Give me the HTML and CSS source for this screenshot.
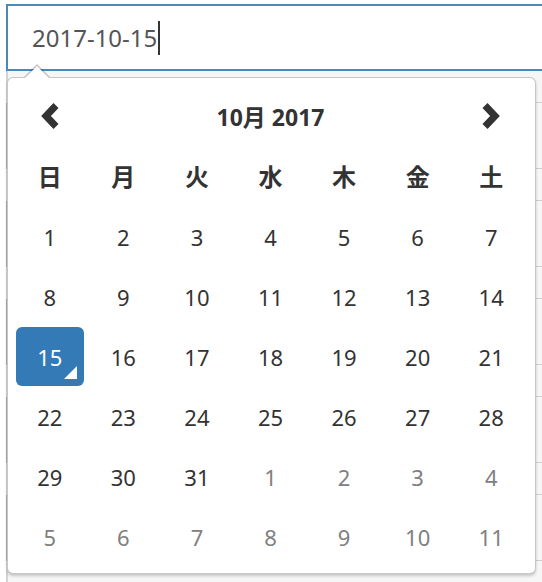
FILE: index.html
```html
<!DOCTYPE html>
<html lang="ja">
<head>
    <meta charset="UTF-8">
    <meta name="viewport" content="width=device-width, initial-scale=1.0">
    <title>Datepicker</title>
    <link rel="stylesheet" href="styles.css">
</head>
<body>
    <div class="field">
        <span class="field-text">2017-10-15</span><span class="text-caret"></span>
    </div>

    <div class="list">
        <div class="row short"></div>
        <div class="row tall"></div>
        <div class="row short"></div>
        <div class="row tall"></div>
        <div class="row short"></div>
        <div class="row tall"></div>
        <div class="row short"></div>
        <div class="row tall"></div>
        <div class="row short"></div>
        <div class="row tall"></div>
        <div class="row short"></div>
    </div>

    <div class="datepicker">
        <div class="dp-head">
            <span class="nav">
                <svg width="24" height="30" viewBox="0 0 24 30"><polyline points="18,4.5 8,15 18,25.5" fill="none" stroke="#333" stroke-width="7" stroke-linejoin="miter"/></svg>
            </span>
            <span class="dp-title">10月 2017</span>
            <span class="nav">
                <svg width="24" height="30" viewBox="0 0 24 30"><polyline points="6,4.5 16,15 6,25.5" fill="none" stroke="#333" stroke-width="7" stroke-linejoin="miter"/></svg>
            </span>
        </div>

        <div class="dp-grid">
            <span class="dow">日</span>
            <span class="dow">月</span>
            <span class="dow">火</span>
            <span class="dow">水</span>
            <span class="dow">木</span>
            <span class="dow">金</span>
            <span class="dow">土</span>

            <span class="day">1</span>
            <span class="day">2</span>
            <span class="day">3</span>
            <span class="day">4</span>
            <span class="day">5</span>
            <span class="day">6</span>
            <span class="day">7</span>

            <span class="day">8</span>
            <span class="day">9</span>
            <span class="day">10</span>
            <span class="day">11</span>
            <span class="day">12</span>
            <span class="day">13</span>
            <span class="day">14</span>

            <span class="day active">15</span>
            <span class="day">16</span>
            <span class="day">17</span>
            <span class="day">18</span>
            <span class="day">19</span>
            <span class="day">20</span>
            <span class="day">21</span>

            <span class="day">22</span>
            <span class="day">23</span>
            <span class="day">24</span>
            <span class="day">25</span>
            <span class="day">26</span>
            <span class="day">27</span>
            <span class="day">28</span>

            <span class="day">29</span>
            <span class="day">30</span>
            <span class="day">31</span>
            <span class="day new">1</span>
            <span class="day new">2</span>
            <span class="day new">3</span>
            <span class="day new">4</span>

            <span class="day new">5</span>
            <span class="day new">6</span>
            <span class="day new">7</span>
            <span class="day new">8</span>
            <span class="day new">9</span>
            <span class="day new">10</span>
            <span class="day new">11</span>
        </div>
    </div>
</body>
</html>
```

FILE: styles.css
```css
body {
    font-family: 'Noto Sans', 'Noto Sans CJK JP', sans-serif;
    margin: 0;
    padding: 0;
    height: 582px;
    overflow: hidden;
    position: relative;
    background-color: #fff;
    color: #333;
}

.field {
    box-sizing: border-box;
    width: 560px;
    height: 67px;
    margin: 4px 0 0 6px;
    padding-left: 24px;
    border: 2px solid #4a8ab9;
    background: #fff;
    display: flex;
    align-items: center;
    font-size: 24px;
    color: #555;
}

.text-caret {
    display: inline-block;
    width: 2px;
    height: 34px;
    margin-left: 1px;
    background: #333;
}

.list {
    margin-left: 6px;
    background: #f6f6f6;
}

.row {
    box-sizing: border-box;
    border-bottom: 1px solid #cfcfcf;
    border-left: 2px solid #aaa;
}

.row.short {
    height: 32px;
    border-left-color: #d4d4d4;
}

.row.tall {
    height: 66px;
}

.datepicker {
    position: absolute;
    left: 7px;
    top: 77px;
    box-sizing: border-box;
    width: 529px;
    height: 497px;
    padding: 7px 7px 0 5px;
    background: #fff;
    border: 1px solid rgba(0, 0, 0, 0.22);
    border-radius: 6px;
    box-shadow: 0 2px 3px rgba(0, 0, 0, 0.2);
}

.datepicker::before,
.datepicker::after {
    content: '';
    position: absolute;
    left: 16px;
    border-left: 13px solid transparent;
    border-right: 13px solid transparent;
}

.datepicker::before {
    top: -14px;
    border-bottom: 13px solid rgba(0, 0, 0, 0.22);
}

.datepicker::after {
    top: -12px;
    left: 17px;
    border-left-width: 12px;
    border-right-width: 12px;
    border-bottom: 12px solid #fff;
}

.dp-head {
    display: grid;
    grid-template-columns: repeat(7, 1fr);
    height: 62px;
    align-items: center;
}

.nav {
    display: flex;
    justify-content: center;
    align-items: center;
}

.dp-title {
    grid-column: 2 / 7;
    text-align: center;
    font-size: 23px;
    font-weight: bold;
    color: #333;
}

.dp-grid {
    display: grid;
    grid-template-columns: repeat(7, 1fr);
    grid-auto-rows: 60px;
}

.dow,
.day {
    display: flex;
    align-items: center;
    justify-content: center;
    line-height: 1;
}

.dow {
    font-size: 24px;
    font-weight: bold;
    color: #333;
}

.day {
    position: relative;
    margin: 0 3px 1px;
    border-radius: 6px;
    font-size: 22px;
    color: #333;
}

.day.new {
    color: #808080;
}

.day.active {
    background: #337ab7;
    color: #fff;
}

.day.active::after {
    content: '';
    position: absolute;
    right: 7px;
    bottom: 7px;
    border-left: 13px solid transparent;
    border-bottom: 13px solid #fff;
}
```
